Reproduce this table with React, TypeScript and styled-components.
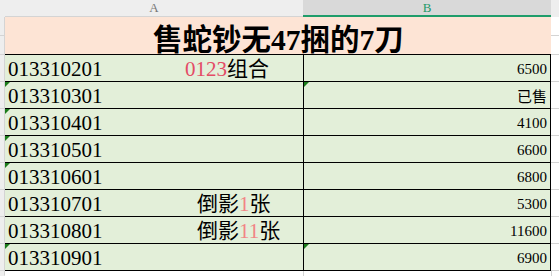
import React from "react";
import styled, { createGlobalStyle } from "styled-components";

const Global = createGlobalStyle`
  html, body { margin: 0; padding: 0; background: #ffffff; overflow: hidden; }
  #root { width: 559px; height: 276px; }
`;

const SERIF = `"Liberation Serif", "Noto Sans CJK SC", serif`;
const GRID = "#d4d4d4";
const INK = "#000000";

const Sheet = styled.div`
  display: flex;
  flex-direction: column;
  width: 559px;
  height: 276px;
  font-family: ${SERIF};
  color: ${INK};
`;

const Row = styled.div<{ $h: number }>`
  display: flex;
  height: ${(p) => p.$h}px;
  flex: none;
`;

const Corner = styled.div`
  width: 5px;
  background: #eeeeee;
`;

const ColHead = styled.div<{ $w: number; $active?: boolean }>`
  width: ${(p) => p.$w}px;
  box-sizing: border-box;
  display: flex;
  align-items: center;
  justify-content: center;
  font-family: "Liberation Serif", serif;
  font-size: 13px;
  line-height: 15px;
  padding-bottom: 1px;
  background: ${(p) => (p.$active ? "#d9d9d9" : "#eeeeee")};
  color: ${(p) => (p.$active ? "#1e9a6a" : "#777777")};
  border-bottom: ${(p) => (p.$active ? "2px solid #1f9d6b" : `1px solid ${GRID}`)};
`;

const HeadTail = styled.div`
  flex: 1;
  background: #eeeeee;
`;

const Stub = styled.div<{ $line?: boolean }>`
  width: 4px;
  background: #eeeeee;
  border-right: 1px solid ${GRID};
  border-bottom: 1px solid ${(p) => (p.$line === false ? "transparent" : GRID)};
`;

const SplitCol = styled.div<{ $w?: number; $bg: string }>`
  display: flex;
  flex-direction: column;
  ${(p) => (p.$w ? `width: ${p.$w}px;` : "flex: 1;")}
  background: ${(p) => p.$bg};
  border-right: ${(p) => (p.$w ? `1px solid ${GRID}` : "none")};
`;

const SplitHalf = styled.div`
  flex: 1;
  border-bottom: 1px solid ${GRID};
`;

const TitleCell = styled.div`
  width: 546px;
  box-sizing: border-box;
  background: #fde4d5;
  border-bottom: 1px solid ${INK};
  display: flex;
  align-items: flex-end;
  justify-content: center;
  font-size: 29.5px;
  font-weight: bold;
  line-height: 28px;
  padding-left: 1px;
  white-space: nowrap;
`;

const Cell = styled.div<{ $w: number; $align?: "left" | "right" }>`
  position: relative;
  width: ${(p) => p.$w}px;
  box-sizing: border-box;
  background: #e3efd9;
  border-right: 1px solid ${INK};
  border-bottom: 1px solid ${INK};
  display: flex;
  align-items: flex-end;
  justify-content: ${(p) => (p.$align === "right" ? "flex-end" : "flex-start")};
`;

const Tail = styled.div<{ $bottom?: boolean }>`
  flex: 1;
  border-bottom: ${(p) => (p.$bottom === false ? "none" : `1px solid ${GRID}`)};
`;

const BlankCell = styled.div<{ $w: number }>`
  width: ${(p) => p.$w}px;
  box-sizing: border-box;
  border-right: 1px solid ${GRID};
`;

const Flag = styled.span`
  position: absolute;
  left: 0;
  top: 0;
  width: 0;
  height: 0;
  border-top: 5px solid #1b7d1b;
  border-right: 5px solid transparent;
`;

const IdText = styled.span`
  box-sizing: border-box;
  width: 180px;
  padding-left: 3px;
  font-size: 21px;
  line-height: 21px;
  padding-bottom: 1px;
  white-space: nowrap;
`;

const Note = styled.span<{ $indent: number }>`
  margin-left: ${(p) => p.$indent}px;
  font-size: 21px;
  line-height: 21px;
  padding-bottom: 1px;
  white-space: nowrap;
`;

const Red = styled.span<{ $soft?: boolean }>`
  color: ${(p) => (p.$soft ? "#f28486" : "#e44b66")};
`;

const Amount = styled.span<{ $cjk?: boolean }>`
  padding-right: 3px;
  font-size: 15px;
  line-height: 16px;
  padding-bottom: ${(p) => (p.$cjk ? "3px" : "4px")};
  white-space: nowrap;
`;

type Piece = { t: string; red?: boolean; soft?: boolean };
type Data = {
  id: string;
  note?: Piece[];
  indent?: number;
  amount: string;
  flagA?: boolean;
  flagB?: boolean;
};

const rows: Data[] = [
  { id: "013310201", note: [{ t: "0123", red: true }, { t: "组合" }], indent: 0, amount: "6500" },
  { id: "013310301", amount: "已售", flagA: true, flagB: true },
  { id: "013310401", amount: "4100", flagA: true },
  { id: "013310501", amount: "6600", flagA: true },
  { id: "013310601", amount: "6800", flagA: true },
  { id: "013310701", note: [{ t: "倒影" }, { t: "1", red: true, soft: true }, { t: "张" }], indent: 12, amount: "5300" },
  { id: "013310801", note: [{ t: "倒影" }, { t: "11", red: true, soft: true }, { t: "张" }], indent: 12, amount: "11600" },
  { id: "013310901", amount: "6900", flagA: true, flagB: true },
];

export default function App() {
  return (
    <>
      <Global />
      <Sheet>
        <Row $h={17}>
          <Corner />
          <ColHead $w={298}>A</ColHead>
          <ColHead $w={248} $active>
            B
          </ColHead>
          <HeadTail />
        </Row>
        <Row $h={38}>
          <SplitCol $w={4} $bg="#eeeeee">
            <SplitHalf />
            <SplitHalf />
          </SplitCol>
          <TitleCell>售蛇钞无47捆的7刀</TitleCell>
          <SplitCol $bg="#ffffff">
            <SplitHalf />
            <SplitHalf />
          </SplitCol>
        </Row>
        {rows.map((r) => (
          <Row $h={27} key={r.id}>
            <Stub />
            <Cell $w={299}>
              {r.flagA && <Flag />}
              <IdText>{r.id}</IdText>
              {r.note && (
                <Note $indent={r.indent ?? 0}>
                  {r.note.map((p, i) =>
                    p.red ? (
                      <Red key={i} $soft={p.soft}>
                        {p.t}
                      </Red>
                    ) : (
                      <span key={i}>{p.t}</span>
                    )
                  )}
                </Note>
              )}
            </Cell>
            <Cell $w={247} $align="right">
              {r.flagB && <Flag />}
              <Amount $cjk={r.amount === "已售"}>{r.amount}</Amount>
            </Cell>
            <Tail />
          </Row>
        ))}
        <Row $h={5}>
          <Stub $line={false} />
          <BlankCell $w={299} />
          <BlankCell $w={248} />
          <Tail $bottom={false} />
        </Row>
      </Sheet>
    </>
  );
}
